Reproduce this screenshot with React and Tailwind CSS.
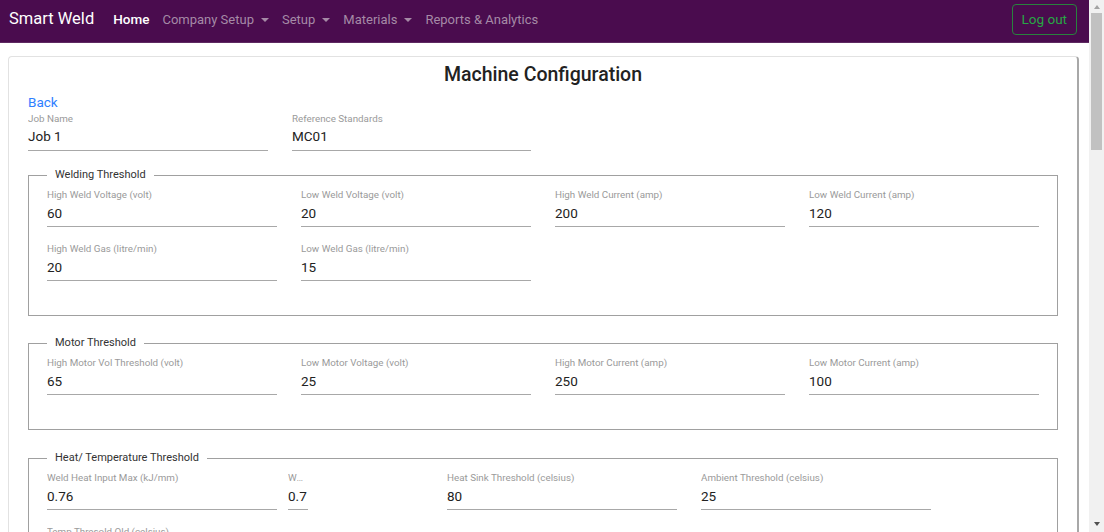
import React from 'react';

const Field = ({ label, value, className = 'w-[230px]' }) => (
    <div className={`${className} flex flex-col shrink-0`}>
        <label className="text-[9.8px] leading-[14px] text-[#9a9a9a] truncate">{label}</label>
        <div className="text-[13.5px] leading-[20px] text-[#222] mt-[0.5px] pb-[3.5px] border-b border-[#a8a8a8]">{value}</div>
    </div>
);

const Group = ({ title, children, className = '' }) => (
    <fieldset className={`border border-[#a0a0a0] mx-0 px-[18px] ${className}`}>
        <legend className="px-[8px] text-[11px] leading-[12px] text-[#333]">{title}</legend>
        {children}
    </fieldset>
);

const ScrollBar = () => (
    <div className="w-[15px] h-screen shrink-0 bg-[#f1f1f1] flex flex-col items-center">
        <span className="mt-[5px] border-x-[3.5px] border-x-transparent border-b-[4px] border-b-[#a3a3a3]"></span>
        <div className="mt-[4px] w-[11px] h-[137px] bg-[#c1c1c1]"></div>
        <span className="mt-auto mb-[6px] border-x-[3.5px] border-x-transparent border-t-[4px] border-t-[#505050]"></span>
    </div>
);

export default function App() {
    const navItems = [
        { name: 'Company Setup', drop: true },
        { name: 'Setup', drop: true },
        { name: 'Materials', drop: true },
        { name: 'Reports & Analytics', drop: false },
    ];

    return (
        <div className="h-screen flex overflow-hidden bg-white font-['Roboto',sans-serif]">
            <div className="flex-1 min-w-0 h-screen overflow-hidden">
                <nav className="h-[43px] bg-[#4a0c4e] border-b border-[#5e2a61] flex items-center pl-[9px] pr-[12px] pb-[3px]">
                    <span className="text-white text-[16.5px] mr-[19px]">Smart Weld</span>
                    <span className="text-white text-[13.5px] font-medium mr-[6.5px]">Home</span>
                    {navItems.map((item) => (
                        <span key={item.name} className="text-[13px] text-[#a58aa6] flex items-center mx-[6.5px]">
                            {item.name}
                            {item.drop && <span className="ml-[7px] border-x-[4px] border-x-transparent border-t-[4px] border-t-[#a58aa6]"></span>}
                        </span>
                    ))}
                    <button className="ml-auto h-[31px] px-[9px] rounded-[4px] border border-[#28833d] text-[#28a745] text-[13.5px]">Log out</button>
                </nav>

                <div className="pl-[8px] pr-[10px] pt-[13px] pb-[20px]">
                    <div className="border border-[#e2e2e2] border-r-2 border-r-[#a8a8a8] rounded-[4px] px-[19px] pt-[4px] pb-[30px]">
                        <h1 className="text-center text-[19.5px] font-medium text-[#222] leading-[28px]">Machine Configuration</h1>
                        <a className="block text-[13.5px] text-[#2f80ff] mt-[5px] leading-[16px]">Back</a>
                        <div className="flex gap-[24px] mt-[1.5px]">
                            <Field label="Job Name" value="Job 1" className="w-[240px]" />
                            <Field label="Reference Standards" value="MC01" className="w-[239px]" />
                        </div>

                        <Group title="Welding Threshold" className="mt-[18.5px] pb-[34px] pt-[7px]">
                            <div className="grid grid-cols-[230px_230px_230px_230px] gap-x-[24px] gap-y-[15px]">
                                <Field label="High Weld Voltage (volt)" value="60" />
                                <Field label="Low Weld Voltage (volt)" value="20" />
                                <Field label="High Weld Current (amp)" value="200" />
                                <Field label="Low Weld Current (amp)" value="120" />
                                <Field label="High Weld Gas (litre/min)" value="20" />
                                <Field label="Low Weld Gas (litre/min)" value="15" />
                            </div>
                        </Group>

                        <Group title="Motor Threshold" className="mt-[21px] pb-[34px] pt-[7px]">
                            <div className="grid grid-cols-[230px_230px_230px_230px] gap-x-[24px]">
                                <Field label="High Motor Vol Threshold (volt)" value="65" />
                                <Field label="Low Motor Voltage (volt)" value="25" />
                                <Field label="High Motor Current (amp)" value="250" />
                                <Field label="Low Motor Current (amp)" value="100" />
                            </div>
                        </Group>

                        <Group title="Heat/ Temperature Threshold" className="mt-[22px] pb-[33px] pt-[7px]">
                            <div className="flex flex-wrap gap-y-[15px]">
                                <Field label="Weld Heat Input Max (kJ/mm)" value="0.76" />
                                <Field label="Weld Heat Input Min (kJ/mm)" value="0.7" className="w-[20px] ml-[11px] mr-[139px]" />
                                <Field label="Heat Sink Threshold (celsius)" value="80" className="w-[230px] mr-[24px]" />
                                <Field label="Ambient Threshold (celsius)" value="25" />
                                <Field label="Temp Thresold Old (celsius)" value="30" className="w-[230px]" />
                            </div>
                        </Group>
                    </div>
                </div>
            </div>
            <ScrollBar />
        </div>
    );
}
